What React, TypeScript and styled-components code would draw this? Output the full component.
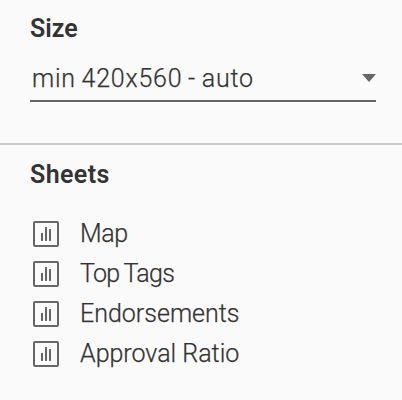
import React from "react";
import styled, { createGlobalStyle } from "styled-components";

const GlobalStyle = createGlobalStyle`
  body {
    margin: 0;
    background: #fafafa;
    color: #333;
    font-family: Roboto, "Liberation Sans", sans-serif;
    font-size: 25px;
    font-weight: 300;
  }
`;

const Panel = styled.main`
  box-sizing: border-box;
  width: 402px;
  height: 400px;
  background: #fafafa;
  overflow: hidden;
`;

const SizeSection = styled.section`
  box-sizing: border-box;
  height: 145px;
  padding: 14px 26px 0 30px;
  border-bottom: 2px solid #cacaca;
`;

const SheetsSection = styled.section`
  padding: 15px 26px 0 30px;
`;

const Heading = styled.h2<{ $spacing: number }>`
  margin: 0;
  font-size: 25px;
  line-height: 30px;
  font-weight: 600;
  letter-spacing: ${(p) => p.$spacing}px;
`;

const Select = styled.div`
  box-sizing: border-box;
  display: flex;
  align-items: center;
  justify-content: space-between;
  height: 48px;
  margin-top: 10px;
  padding: 3px 0 0 2px;
  border-bottom: 2px solid #666;
`;

const Label = styled.span<{ $spacing: number; $wordSpacing?: number }>`
  line-height: 40px;
  white-space: nowrap;
  letter-spacing: ${(p) => p.$spacing}px;
  word-spacing: ${(p) => p.$wordSpacing ?? 0}px;
  -webkit-text-stroke: 0.25px #333;
`;

const Arrow = styled.svg`
  display: block;
  margin-bottom: 1px;
`;

const SheetList = styled.ul`
  list-style: none;
  margin: 24px 0 0;
  padding: 0;
`;

const SheetRow = styled.li`
  display: flex;
  align-items: center;
  gap: 21px;
  height: 40px;
  padding-left: 3px;
`;

const SheetIcon = () => (
  <svg width="26" height="26" viewBox="0 0 26 26" fill="none">
    <rect x="1" y="1" width="24" height="24" rx="1" stroke="#666" strokeWidth="2" />
    <path d="M9 12v8M13 6v14M17 8v12" stroke="#666" strokeWidth="2" />
  </svg>
);

const sheets = [
  { name: "Map", spacing: -0.4 },
  { name: "Top Tags", spacing: -0.7, wordSpacing: -1 },
  { name: "Endorsements", spacing: 0 },
  { name: "Approval Ratio", spacing: 0 },
];

export default function App() {
  return (
    <>
      <GlobalStyle />
      <Panel>
        <SizeSection>
          <Heading $spacing={0}>Size</Heading>
          <Select>
            <Label $spacing={0.75} $wordSpacing={-1}>min 420x560 - auto</Label>
            <Arrow width="14" height="8" viewBox="0 0 14 8">
              <path d="M0 0h14L7 8z" fill="#666" />
            </Arrow>
          </Select>
        </SizeSection>
        <SheetsSection>
          <Heading $spacing={0.4}>Sheets</Heading>
          <SheetList>
            {sheets.map((s) => (
              <SheetRow key={s.name}>
                <SheetIcon />
                <Label $spacing={s.spacing} $wordSpacing={s.wordSpacing}>{s.name}</Label>
              </SheetRow>
            ))}
          </SheetList>
        </SheetsSection>
      </Panel>
    </>
  );
}
